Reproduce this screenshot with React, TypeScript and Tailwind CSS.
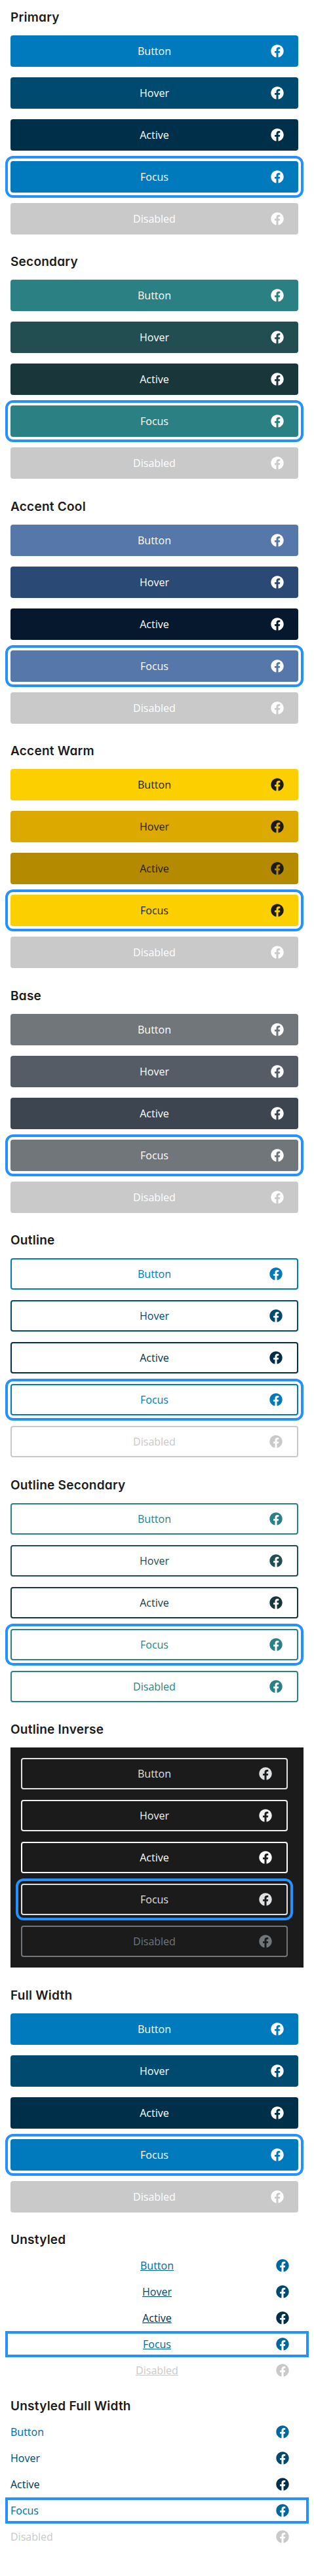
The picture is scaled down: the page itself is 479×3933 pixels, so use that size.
import { FaFacebook } from "react-icons/fa";

type Variant = { label: string; className: string };

const focusRing = "outline-4 outline-offset-4 outline-[#2491ff]";

const filled = (base: string, hover: string, active: string, text = "text-white"): Variant[] => [
  { label: "Button", className: `${base} ${text}` },
  { label: "Hover", className: `${hover} ${text}` },
  { label: "Active", className: `${active} ${text}` },
  { label: "Focus", className: `${base} ${text} ${focusRing}` },
  { label: "Disabled", className: "bg-[#c9c9c9] text-white" },
];

const primary = filled("bg-[#007abd]", "bg-[#004a70]", "bg-[#003049]");
const secondary = filled("bg-[#2b8084]", "bg-[#224d51]", "bg-[#19363a]");
const accentCool = filled("bg-[#5577aa]", "bg-[#2a4a75]", "bg-[#05182e]");
const accentWarm = filled("bg-[#fccf00]", "bg-[#dca900]", "bg-[#b38a00]", "text-[#1b1b1b]");
const base = filled("bg-[#71767a]", "bg-[#565c65]", "bg-[#3d4551]");

const outline: Variant[] = [
  { label: "Button", className: "border-2 border-[#007abd] text-[#007abd]" },
  { label: "Hover", className: "border-2 border-[#004a70] text-[#004a70]" },
  { label: "Active", className: "border-2 border-[#003049] text-[#003049]" },
  { label: "Focus", className: `border-2 border-[#007abd] text-[#007abd] ${focusRing}` },
  { label: "Disabled", className: "border-2 border-[#c9c9c9] text-[#c9c9c9]" },
];

const outlineSecondary: Variant[] = [
  { label: "Button", className: "border-2 border-[#2b8084] text-[#2b8084]" },
  { label: "Hover", className: "border-2 border-[#224d51] text-[#224d51]" },
  { label: "Active", className: "border-2 border-[#19363a] text-[#19363a]" },
  { label: "Focus", className: `border-2 border-[#2b8084] text-[#2b8084] ${focusRing}` },
  { label: "Disabled", className: "border-2 border-[#2b8084] text-[#2b8084]" },
];

const outlineInverse: Variant[] = [
  { label: "Button", className: "border-2 border-[#dfe1e2] text-[#dfe1e2]" },
  { label: "Hover", className: "border-2 border-[#f0f0f0] text-[#f0f0f0]" },
  { label: "Active", className: "border-2 border-white text-white" },
  { label: "Focus", className: `border-2 border-[#dfe1e2] text-[#dfe1e2] ${focusRing}` },
  { label: "Disabled", className: "border-2 border-[#71767a] text-[#71767a]" },
];

const unstyled: Variant[] = [
  { label: "Button", className: "text-[#00689e]" },
  { label: "Hover", className: "text-[#004a70]" },
  { label: "Active", className: "text-[#003049]" },
  { label: "Focus", className: `text-[#00689e] ${focusRing}` },
  { label: "Disabled", className: "text-[#c9c9c9]" },
];

const Heading = ({ children }: { children: string }) => (
  <h3 className="h-[21.5px] mb-4 flex items-center font-['Inter',sans-serif] text-[19px] font-semibold tracking-[0.25px] text-[#1b1b1b] [font-feature-settings:'cv11']">
    {children}
  </h3>
);

const Button = ({ label, className }: Variant) => (
  <button className={`mr-2 h-12 px-[22px] grid grid-cols-[1fr_auto_1fr] items-center rounded font-medium ${className}`}>
    <span />
    <span>{label}</span>
    <FaFacebook className="justify-self-end" size={20} />
  </button>
);

const Section = ({ title, items }: { title: string; items: Variant[] }) => (
  <section className="mb-8">
    <Heading>{title}</Heading>
    <div className="flex flex-col gap-4">
      {items.map((item) => (
        <Button key={item.label} {...item} />
      ))}
    </div>
  </section>
);

export default function App() {
  return (
    <div className="bg-white px-4 pt-[16.25px] pb-12 font-['Open_Sans',sans-serif] text-base">
      <Section title="Primary" items={primary} />
      <Section title="Secondary" items={secondary} />
      <Section title="Accent Cool" items={accentCool} />
      <Section title="Accent Warm" items={accentWarm} />
      <Section title="Base" items={base} />
      <Section title="Outline" items={outline} />
      <Section title="Outline Secondary" items={outlineSecondary} />

      <section className="mb-8">
        <Heading>Outline Inverse</Heading>
        <div className="bg-[#1b1b1b] p-4 flex flex-col gap-4">
          {outlineInverse.map((item) => (
            <Button key={item.label} {...item} />
          ))}
        </div>
      </section>

      <Section title="Full Width" items={primary} />

      <section className="mb-8">
        <Heading>Unstyled</Heading>
        <div className="flex flex-col gap-4">
          {unstyled.map((item) => (
            <button
              key={item.label}
              className={`h-6 px-[22px] grid grid-cols-[1fr_auto_1fr] items-center ${item.className}`}
            >
              <span />
              <span className="underline">{item.label}</span>
              <FaFacebook className="justify-self-end" size={20} />
            </button>
          ))}
        </div>
      </section>

      <section>
        <Heading>Unstyled Full Width</Heading>
        <div className="flex flex-col gap-4">
          {unstyled.map((item) => (
            <button
              key={item.label}
              className={`h-6 pr-[22px] flex items-center justify-between ${item.className}`}
            >
              <span>{item.label}</span>
              <FaFacebook size={20} />
            </button>
          ))}
        </div>
      </section>
    </div>
  );
}
